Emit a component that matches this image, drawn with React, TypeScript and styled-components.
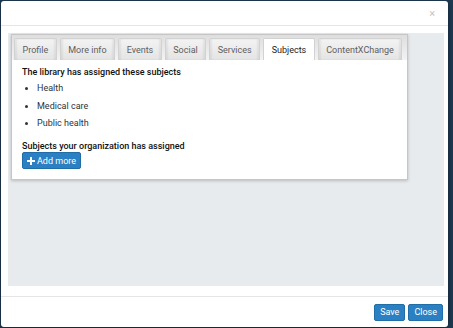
import React from 'react';
import styled, { createGlobalStyle } from 'styled-components';

const tabs = ['Profile', 'More info', 'Events', 'Social', 'Services', 'Subjects', 'ContentXChange'];
const subjects = ['Health', 'Medical care', 'Public health'];

const App: React.FC = () => {
  return (
    <Backdrop>
      <GlobalStyle />
      <Modal>
        <Header>
          <CloseX>×</CloseX>
        </Header>
        <Body>
          <Panel>
            <Card>
              <TabStrip>
                {tabs.map((t) => (
                  <Tab key={t} active={t === 'Subjects'}>{t}</Tab>
                ))}
              </TabStrip>
              <Content>
                <Heading>The library has assigned these subjects</Heading>
                <List>
                  {subjects.map((s) => (
                    <li key={s}>{s}</li>
                  ))}
                </List>
                <Heading>Subjects your organization has assigned</Heading>
                <BlueButton compact>
                  <svg width="8" height="8" viewBox="0 0 9 9">
                    <path d="M3.4 0h2.2v3.4H9v2.2H5.6V9H3.4V5.6H0V3.4h3.4z" fill="#fff" />
                  </svg>
                  Add more
                </BlueButton>
              </Content>
            </Card>
          </Panel>
        </Body>
        <Footer>
          <BlueButton>Save</BlueButton>
          <BlueButton>Close</BlueButton>
        </Footer>
      </Modal>
    </Backdrop>
  );
};

export default App;

const GlobalStyle = createGlobalStyle`
  body {
    margin: 0;
    background: #1e3a52;
    font-family: Roboto, "Liberation Sans", sans-serif;
  }
`;

const Backdrop = styled.div`
  width: 453px;
  height: 328px;
  box-sizing: border-box;
  padding: 1px 5px 1px 1px;
  background: #1e3a52;
`;

const Modal = styled.div`
  height: 100%;
  background: #fff;
  border-radius: 3px;
  display: flex;
  flex-direction: column;
  box-shadow: 0 2px 6px rgba(0, 0, 0, 0.4);
`;

const Header = styled.div`
  height: 24px;
  border-bottom: 1px solid #e5e5e5;
  display: flex;
  justify-content: flex-end;
  align-items: center;
  padding-right: 13px;
`;

const CloseX = styled.span`
  color: #c4c4c4;
  font-size: 11px;
  line-height: 1;
`;

const Body = styled.div`
  padding: 7px 4px 10px 7px;
`;

const Panel = styled.div`
  height: 252px;
  background: #e8ebee;
  padding: 1px 36px 0 3px;
`;

const Card = styled.div`
  background: #fff;
  border: 1px solid #c6c6c6;
  box-shadow: 0 1px 3px rgba(0, 0, 0, 0.2);
  height: 146px;
  box-sizing: border-box;
`;

const TabStrip = styled.div`
  display: flex;
  gap: 3px;
  padding: 3px 0 0 2px;
  background: linear-gradient(#dedede, #f3f3f3);
`;

const Tab = styled.div<{ active?: boolean }>`
  height: 22px;
  box-sizing: border-box;
  padding: 0 7.5px;
  display: flex;
  align-items: center;
  white-space: nowrap;
  font-size: 9px;
  color: ${(p) => (p.active ? '#222' : '#5e5e5e')};
  background: ${(p) => (p.active ? '#fff' : 'linear-gradient(#f3f3f3, #e4e4e4)')};
  border: 1px solid #d2d2d2;
  border-bottom: 0;
  border-radius: 2px 2px 0 0;
  box-shadow: ${(p) => (p.active ? 'none' : 'inset -2px 0 2px rgba(0,0,0,0.06), inset 2px 0 2px rgba(0,0,0,0.06)')};
`;

const Content = styled.div`
  padding: 7px 10px 0;
  font-size: 9px;
  color: #222;
`;

const Heading = styled.div`
  font-weight: 500;
  color: #111;
  line-height: 11px;
`;

const List = styled.ul`
  margin: 5px 0 12px;
  padding-left: 15px;
  color: #333;
  li {
    line-height: 11px;
    margin-bottom: 6.5px;
  }
`;

const BlueButton = styled.button<{ compact?: boolean }>`
  display: inline-flex;
  align-items: center;
  gap: ${(p) => (p.compact ? '2px' : '3px')};
  height: 17px;
  padding: ${(p) => (p.compact ? '0 4px' : '0 5px')};
  border: 1px solid #1f6ea8;
  border-radius: 2px;
  background: #2a80c3;
  color: #fff;
  font-family: Roboto, "Liberation Sans", sans-serif;
  font-size: 9px;
  font-weight: 400;
  cursor: pointer;
`;

const Footer = styled.div`
  flex: 1;
  border-top: 1px solid #e5e5e5;
  display: flex;
  justify-content: flex-end;
  align-items: center;
  gap: 3px;
  padding: 0 5px 0 0;
`;
